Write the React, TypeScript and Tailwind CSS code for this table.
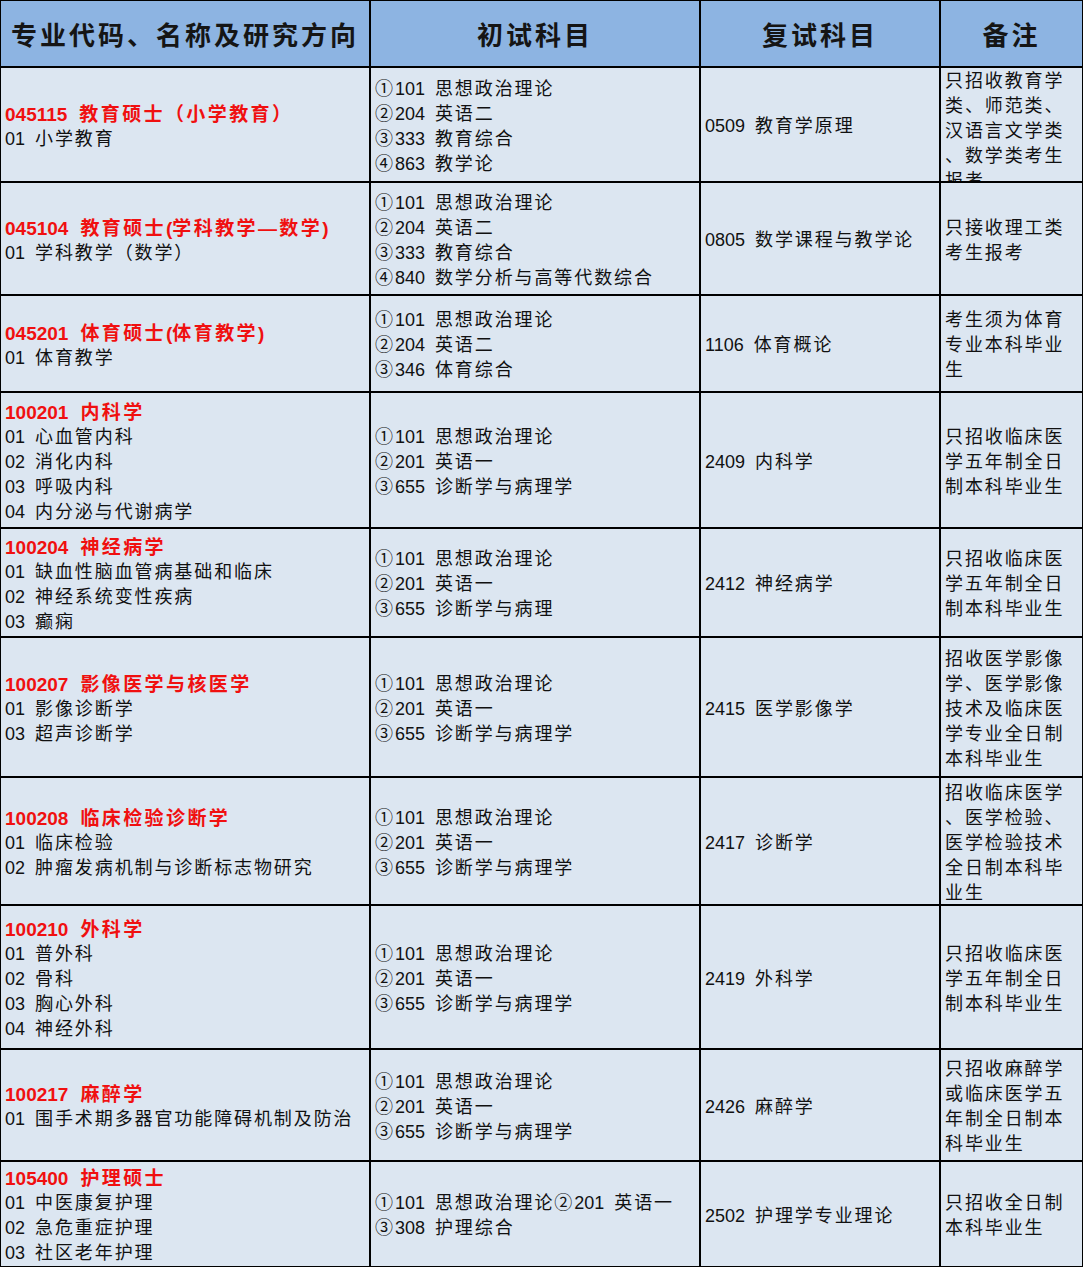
import React from "react";

const CJK = /([\u2460-\u24ff\u2014\u3000-\u303f\u4e00-\u9fff\uff00-\uffef]+|\s+)/;

function T({ s, wide }: { s: string; wide?: boolean }) {
  const parts = s.split(CJK).filter((p) => p !== "");
  return (
    <>
      {parts.map((p, i) =>
        /^\s+$/.test(p) ? (
          <span key={i} className={wide ? "inline-block w-[12px]" : "inline-block w-[10px]"} />
        ) : /[\u2460-\u24ff\u2014\u3000-\u303f\u4e00-\u9fff\uff00-\uffef]/.test(p) ? (
          <span key={i} className={wide ? "tracking-[2.4px]" : "tracking-[1.9px]"}>
            {p}
          </span>
        ) : (
          <span key={i}>{p}</span>
        )
      )}
    </>
  );
}

type Row = {
  title: string;
  dirs: string[];
  exam: string[];
  re: string;
  note: string[];
  noteTop?: boolean;
};

const rows: Row[] = [
  {
    title: "045115 教育硕士（小学教育）",
    dirs: ["01 小学教育"],
    exam: ["①101 思想政治理论", "②204 英语二", "③333 教育综合", "④863 教学论"],
    re: "0509 教育学原理",
    note: ["只招收教育学", "类、师范类、", "汉语言文学类", "、数学类考生", "报考"],
    noteTop: true,
  },
  {
    title: "045104 教育硕士(学科教学—数学)",
    dirs: ["01 学科教学（数学）"],
    exam: ["①101 思想政治理论", "②204 英语二", "③333 教育综合", "④840 数学分析与高等代数综合"],
    re: "0805 数学课程与教学论",
    note: ["只接收理工类", "考生报考"],
  },
  {
    title: "045201 体育硕士(体育教学)",
    dirs: ["01 体育教学"],
    exam: ["①101 思想政治理论", "②204 英语二", "③346 体育综合"],
    re: "1106 体育概论",
    note: ["考生须为体育", "专业本科毕业", "生"],
  },
  {
    title: "100201 内科学",
    dirs: ["01 心血管内科", "02 消化内科", "03 呼吸内科", "04 内分泌与代谢病学"],
    exam: ["①101 思想政治理论", "②201 英语一", "③655 诊断学与病理学"],
    re: "2409 内科学",
    note: ["只招收临床医", "学五年制全日", "制本科毕业生"],
  },
  {
    title: "100204 神经病学",
    dirs: ["01 缺血性脑血管病基础和临床", "02 神经系统变性疾病", "03 癫痫"],
    exam: ["①101 思想政治理论", "②201 英语一", "③655 诊断学与病理"],
    re: "2412 神经病学",
    note: ["只招收临床医", "学五年制全日", "制本科毕业生"],
  },
  {
    title: "100207 影像医学与核医学",
    dirs: ["01 影像诊断学", "03 超声诊断学"],
    exam: ["①101 思想政治理论", "②201 英语一", "③655 诊断学与病理学"],
    re: "2415 医学影像学",
    note: ["招收医学影像", "学、医学影像", "技术及临床医", "学专业全日制", "本科毕业生"],
  },
  {
    title: "100208 临床检验诊断学",
    dirs: ["01 临床检验", "02 肿瘤发病机制与诊断标志物研究"],
    exam: ["①101 思想政治理论", "②201 英语一", "③655 诊断学与病理学"],
    re: "2417 诊断学",
    note: ["招收临床医学", "、医学检验、", "医学检验技术", "全日制本科毕", "业生"],
  },
  {
    title: "100210 外科学",
    dirs: ["01 普外科", "02 骨科", "03 胸心外科", "04 神经外科"],
    exam: ["①101 思想政治理论", "②201 英语一", "③655 诊断学与病理学"],
    re: "2419 外科学",
    note: ["只招收临床医", "学五年制全日", "制本科毕业生"],
  },
  {
    title: "100217 麻醉学",
    dirs: ["01 围手术期多器官功能障碍机制及防治"],
    exam: ["①101 思想政治理论", "②201 英语一", "③655 诊断学与病理学"],
    re: "2426 麻醉学",
    note: ["只招收麻醉学", "或临床医学五", "年制全日制本", "科毕业生"],
  },
  {
    title: "105400 护理硕士",
    dirs: ["01 中医康复护理", "02 急危重症护理", "03 社区老年护理"],
    exam: ["①101 思想政治理论②201 英语一", "③308 护理综合"],
    re: "2502 护理学专业理论",
    note: ["只招收全日制", "本科毕业生"],
  },
];

const cell =
  "bg-[#dce6f1] flex flex-col pl-[4px] overflow-hidden whitespace-nowrap text-[18px] leading-[25px] text-[#111]";

function Lines({ items }: { items: string[] }) {
  return (
    <>
      {items.map((l, i) => (
        <div key={i}>
          <T s={l} />
        </div>
      ))}
    </>
  );
}

export default function App() {
  return (
    <div className="w-[1083px] h-[1267px] bg-white font-['Liberation_Sans','Noto_Sans_CJK_SC',sans-serif]">
      <div className="grid grid-cols-[368px_328px_238px_141px] grid-rows-[65px_113px_111px_95px_134px_107px_138px_126px_142px_110px_104px] gap-[2px] p-[1px] bg-black w-[1083px] h-[1267px]">
        {["专业代码、名称及研究方向", "初试科目", "复试科目", "备注"].map((h) => (
          <div
            key={h}
            className="bg-[#8db4e2] flex items-center justify-center pt-[6px] text-[26px] font-bold tracking-[3px] text-[#151515] whitespace-nowrap"
          >
            {h}
          </div>
        ))}
        {rows.map((r) => (
          <React.Fragment key={r.title}>
            <div className={`${cell} justify-center pt-[4px]`}>
              <div className="font-bold text-[19px] text-[#f01010]">
                <T s={r.title} wide />
              </div>
              <Lines items={r.dirs} />
            </div>
            <div className={`${cell} justify-center pt-[4px]`}>
              <Lines items={r.exam} />
            </div>
            <div className={`${cell} justify-center pt-[4px]`}>
              <div>
                <T s={r.re} />
              </div>
            </div>
            <div className={`${cell} ${r.noteTop ? "justify-start pt-[1px]" : "justify-center pt-[4px]"}`}>
              <Lines items={r.note} />
            </div>
          </React.Fragment>
        ))}
      </div>
    </div>
  );
}
